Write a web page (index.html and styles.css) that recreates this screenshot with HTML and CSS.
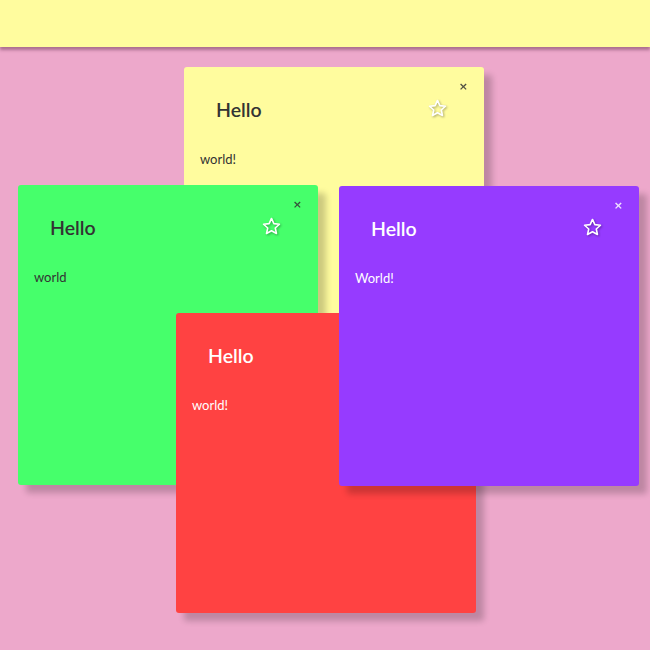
FILE: index.html
```html
<!DOCTYPE html>
<html>
<head>
<meta charset="utf-8">
<link rel="stylesheet" href="styles.css">
</head>
<body>
<header class="topbar"></header>
<main class="board">
  <div class="note note-yellow" style="left:184px;top:20px">
    <button class="close">×</button>
    <div class="note-head">
      <h2 class="title">Hello</h2>
      <svg class="star" viewBox="0 0 24 24"><path d="M12 2.8l2.7 5.9 6.4.7-4.8 4.3 1.4 6.3L12 16.8 6.3 20l1.4-6.3-4.8-4.3 6.4-.7z"/></svg>
    </div>
    <p class="body">world!</p>
  </div>
  <div class="note note-green" style="left:18px;top:138px">
    <button class="close">×</button>
    <div class="note-head">
      <h2 class="title">Hello</h2>
      <svg class="star" viewBox="0 0 24 24"><path d="M12 2.8l2.7 5.9 6.4.7-4.8 4.3 1.4 6.3L12 16.8 6.3 20l1.4-6.3-4.8-4.3 6.4-.7z"/></svg>
    </div>
    <p class="body">world</p>
  </div>
  <div class="note note-red" style="left:176px;top:266px">
    <div class="note-head">
      <h2 class="title">Hello</h2>
    </div>
    <p class="body">world!</p>
  </div>
  <div class="note note-purple" style="left:339px;top:139px">
    <button class="close">×</button>
    <div class="note-head">
      <h2 class="title">Hello</h2>
      <svg class="star" viewBox="0 0 24 24"><path d="M12 2.8l2.7 5.9 6.4.7-4.8 4.3 1.4 6.3L12 16.8 6.3 20l1.4-6.3-4.8-4.3 6.4-.7z"/></svg>
    </div>
    <p class="body">World!</p>
  </div>
</main>
</body>
</html>
```
FILE: styles.css
```css
html, body {
  margin: 0;
  height: 100%;
}
body {
  background: #eda8cb;
  font-family: Lato, "Open Sans", sans-serif;
  overflow: hidden;
}
.topbar {
  display: block;
  height: 47px;
  background: #fffc9e;
  box-shadow: 0 3px 3px rgba(90, 40, 70, 0.45);
  position: relative;
  z-index: 10;
}
.board {
  position: relative;
  display: block;
}
.note {
  position: absolute;
  width: 300px;
  height: 300px;
  box-sizing: border-box;
  padding: 16px;
  border-radius: 3px;
  box-shadow: 8px 8px 6px rgba(0, 0, 0, 0.2);
  color: #333;
}
.note-yellow { background: #fffc9e; }
.note-green { background: #46ff6b; }
.note-red { background: #ff4242; color: #fff; }
.note-purple { background: #963bff; color: #fff; }
.close {
  position: absolute;
  top: 13px;
  right: 16px;
  border: 0;
  background: none;
  padding: 0;
  font-family: "DejaVu Sans", sans-serif;
  font-size: 11px;
  line-height: 14px;
  font-weight: bold;
  color: inherit;
  opacity: 0.85;
}
.note-head {
  display: flex;
  align-items: center;
  justify-content: space-between;
  height: 26px;
  margin-top: 14px;
  padding: 0 20px 0 16px;
}
.title {
  margin: 0;
  font-size: 19.5px;
  line-height: 26px;
  font-weight: 600;
}
.star {
  width: 21px;
  height: 21px;
  margin-top: -3px;
  fill: none;
  stroke: #fff;
  stroke-width: 1.8;
  stroke-linejoin: round;
  filter: drop-shadow(1px 1px 1px rgba(0, 0, 0, 0.35));
}
.body {
  margin: 27px 0 0;
  font-size: 13px;
  line-height: 18px;
}
```
